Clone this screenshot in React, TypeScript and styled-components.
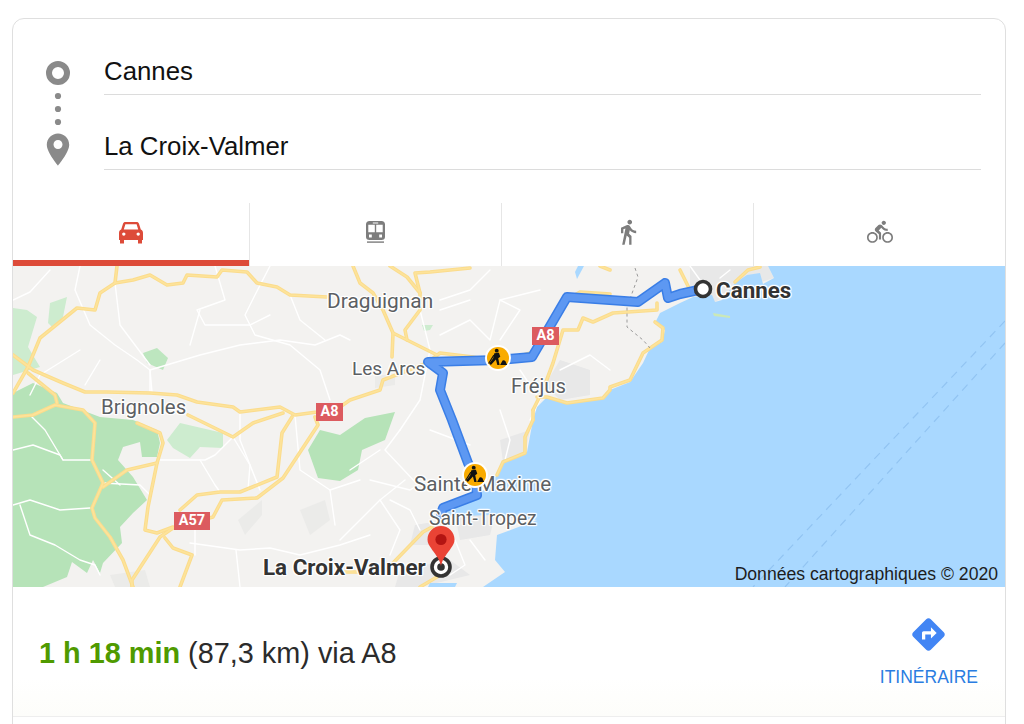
import styled, { createGlobalStyle } from "styled-components";
import { MdDirections, MdDirectionsBike, MdDirectionsWalk } from "react-icons/md";

const GlobalStyle = createGlobalStyle`
  html, body {
    margin: 0;
    height: 100%;
    overflow: hidden;
    background: #fff;
  }
  #root {
    height: 100%;
  }
`;

const Page = styled.div`
  height: 100%;
  box-sizing: border-box;
  padding: 18px 18px 0 12px;
  font-family: "Liberation Sans", Arial, sans-serif;
`;

const Card = styled.div`
  height: 740px;
  box-sizing: border-box;
  background: #fff;
  border: 1px solid #dfdfdf;
  border-radius: 12px;
  overflow: hidden;
`;

const Form = styled.div`
  display: flex;
  gap: 34px;
  padding: 32px 24px 33px 33px;
`;

const StopIcons = styled.svg`
  flex: none;
  margin-top: 10px;
  width: 24px;
  height: 105px;
`;

const Fields = styled.div`
  flex: 1;
  display: flex;
  flex-direction: column;
  gap: 31px;
`;

const Field = styled.div`
  height: 43px;
  line-height: 41px;
  font-size: 25.8px;
  color: #111;
  border-bottom: 1px solid #dcdcdc;
`;

const Tabs = styled.div`
  display: grid;
  grid-template-columns: 236px repeat(3, 1fr);
  height: 63px;
`;

const Tab = styled.div<{ $active?: boolean }>`
  display: flex;
  align-items: center;
  justify-content: center;
  box-sizing: border-box;
  padding-top: ${(p) => (p.$active ? "3px" : "0")};
  padding-bottom: ${(p) => (p.$active ? "0" : "6px")};
  color: ${(p) => (p.$active ? "#dd4b39" : "#7d7d7d")};
  border-left: ${(p) => (p.$active ? "none" : "1px solid #e6e6e6")};
  border-bottom: ${(p) => (p.$active ? "6px solid #dd4b39" : "none")};
`;

const MapArea = styled.div`
  position: relative;
  height: 321px;
  overflow: hidden;
  background: #f3f2f0;
`;

const MapLayer = styled.svg`
  position: absolute;
  inset: 0;
  width: 992px;
  height: 321px;
`;

const PlaceLabel = styled.span<{ $x: number; $y: number; $size: number; $strong?: boolean }>`
  position: absolute;
  left: ${(p) => p.$x - 13}px;
  top: ${(p) => p.$y - 266}px;
  transform: translateY(-50%);
  font-family: Roboto, "Liberation Sans", sans-serif;
  font-size: ${(p) => p.$size}px;
  font-weight: ${(p) => (p.$strong ? 700 : 400)};
  line-height: 1;
  white-space: nowrap;
  color: ${(p) => (p.$strong ? "#333" : "#5c5f63")};
  text-shadow:
    -1px 0 1px #fff, 1px 0 1px #fff, 0 -1px 1px #fff, 0 1px 1px #fff,
    -1px -1px 1px #fff, 1px 1px 1px #fff, 1px -1px 1px #fff, -1px 1px 1px #fff;
`;

const RoadShield = styled.span<{ $x: number; $y: number; $w: number }>`
  position: absolute;
  left: ${(p) => p.$x - 13}px;
  top: ${(p) => p.$y - 266}px;
  width: ${(p) => p.$w}px;
  height: 18px;
  background: #dc5b5f;
  color: #fff;
  font-family: Roboto, "Liberation Sans", sans-serif;
  font-size: 14.5px;
  font-weight: 700;
  line-height: 18px;
  text-align: center;
`;

const Attribution = styled.span`
  position: absolute;
  right: 7px;
  bottom: 3px;
  font-size: 17.6px;
  line-height: 20px;
  color: #1d1d1d;
`;

const Summary = styled.div`
  display: flex;
  justify-content: space-between;
  height: 130px;
  box-sizing: border-box;
  padding: 28px 27px 0 26px;
  background: linear-gradient(#fff 70%, #fdfdfa);
  border-bottom: 1px solid #eeeeee;
`;

const RouteText = styled.div`
  padding-top: 21px;
  font-size: 28.85px;
  line-height: 34px;
  color: #2b2b2b;
`;

const Duration = styled.span`
  font-weight: 700;
  color: #4f9a00;
`;

const DirectionsLink = styled.div`
  display: flex;
  flex-direction: column;
  align-items: center;
  gap: 13px;
  color: #2a7de1;
  font-size: 17.5px;
  line-height: 20px;
  svg {
    color: #4285f4;
  }
`;

const yellowRoads = [
  "13,355 33,370 63,383 85,392 107,392 150,393 177,395 197,402 233,407 240,412 280,407 295,415 317,412 340,407 350,400 380,390 383,380 427,363 440,353 473,357 500,362 530,353",
  "117,266 115,283 100,293 95,310 77,308 40,338 28,367 13,393",
  "115,283 133,280 150,275 167,285 183,283 187,275 217,277 222,270 247,272 257,283 277,287 290,295 327,297",
  "13,417 33,415 55,405 83,410 95,423 92,460 103,483 92,508 95,518 110,537 123,560 133,587",
  "28,373 55,395 57,403",
  "103,487 127,470 157,463 163,443 160,433 137,423",
  "157,463 148,507 145,530 157,533 173,527",
  "132,587 132,580 160,537 173,528 213,517 222,500 257,498 283,478 318,425 315,417",
  "180,510 197,495 220,492 240,492 277,477 282,433 292,417",
  "188,415 233,437 253,423 283,413",
  "165,538 173,548 192,555 180,587",
  "353,266 360,283 373,293 383,310 393,333 392,357",
  "393,333 407,340 437,355",
  "390,266 407,277 420,293 420,310 405,330 407,340",
  "420,293 415,273 430,272 470,268",
  "533,420 525,437 525,453 503,462 497,475",
  "533,410 543,390 553,363 563,330 578,330 583,318 593,322 613,313 657,310 657,303",
  "537,397 547,397 567,403 603,398 610,390 610,387 630,380 643,353 662,340 663,328 655,322",
  "533,410 533,420",
  "393,563 423,532 432,527",
  "420,587 437,577",
  "340,572 358,572",
  "566,300 580,292 610,294",
  "680,270 690,290",
  "735,282 748,270 760,267",
  "600,266 610,270",
];

const whiteRoads = [
  "13,300 30,292 50,270",
  "80,266 75,290 90,325 115,345 137,360 150,370 152,392",
  "115,283 120,325 150,365",
  "150,370 200,355 240,345 280,340 315,345 340,335 350,340",
  "215,266 225,300 197,310 205,325 250,325 270,315",
  "270,266 255,295 245,315 255,335 290,345 320,370 330,400",
  "290,295 300,320 325,340",
  "200,310 190,345",
  "80,350 40,375 30,395",
  "100,360 85,385",
  "150,393 150,370",
  "240,412 240,440 260,490",
  "233,437 215,455 205,460 190,460 160,460",
  "233,437 250,465 248,490",
  "200,460 215,485 220,492",
  "13,450 33,445 60,455 63,460 85,460 92,460",
  "63,460 45,430 30,415",
  "13,505 30,500 60,510 90,508",
  "20,505 30,535 55,545 80,560 95,565 100,575",
  "103,483 140,485 150,495",
  "103,470 120,485",
  "190,543 240,550 270,548 300,555 340,545 370,535",
  "236,550 240,587",
  "195,530 195,555",
  "295,415 300,470 330,490 335,525",
  "330,490 360,480",
  "370,480 410,490 418,485 385,450 400,430",
  "380,450 350,470",
  "420,310 430,350 420,400 400,430",
  "440,300 470,290 490,270",
  "440,335 470,320 490,340 500,300 540,290",
  "440,310 470,300",
  "500,340 520,310 500,300",
  "520,370 540,400 530,420",
  "500,410 510,440 505,460",
  "430,430 470,445",
  "390,500 410,510 420,530",
  "340,540 380,500 405,480",
  "380,500 400,530 390,555",
  "455,540 465,565 450,575",
  "470,540 485,560",
  "560,370 590,355 610,370",
  "700,280 690,266",
  "720,278 730,270",
];

function RoadLines({ roads, color, width }: { roads: string[]; color: string; width: number }) {
  return (
    <g fill="none" stroke={color} strokeWidth={width} strokeLinejoin="round" strokeLinecap="round">
      {roads.map((r) => (
        <polyline key={r} points={r} />
      ))}
    </g>
  );
}

function CarIcon() {
  return (
    <svg width="24" height="22" viewBox="0 0 24 22" fill="currentColor">
      <path
        fillRule="evenodd"
        d="M6.5 0H17.5C18.8 0 19.6 .6 20 1.8L21.8 7.6C23.2 8.2 24 9.2 24 11V18H23V21.5H19V18H5V21.5H1V18H0V11C0 9.2 .8 8.2 2.2 7.6L4 1.8C4.4 .6 5.2 0 6.5 0ZM6.4 2.2L4.8 7.4H19.2L17.6 2.2ZM4.8 10.4A1.7 1.7 0 1 0 4.8 13.8A1.7 1.7 0 1 0 4.8 10.4ZM19.2 10.4A1.7 1.7 0 1 0 19.2 13.8A1.7 1.7 0 1 0 19.2 10.4Z"
      />
    </svg>
  );
}

function TrainIcon() {
  return (
    <svg width="20" height="22" viewBox="0 0 20 22" fill="currentColor">
      <path
        fillRule="evenodd"
        d="M3.5 0H15.5C17.7 0 19 1.3 19 3.5V16C19 18 17.7 19 15.5 19H3.5C1.3 19 0 18 0 16V3.5C0 1.3 1.3 0 3.5 0ZM6.8 1.5V2.6H12.2V1.5ZM2.3 3.8V11.2H8.8V3.8ZM10.2 3.8V11.2H16.7V3.8ZM3 13.6V16.4H5.8V13.6ZM13.2 13.6V16.4H16V13.6Z"
      />
      <rect x="1" y="20.4" width="17" height="1.4" />
    </svg>
  );
}

function BaseMap() {
  const route =
    "703,289 680,294 668,298 665,283 638,302 567,297 532,357 498,360 428,362 443,373 440,390 452,420 468,463 475,475 477,495 443,508 441,514";
  return (
    <MapLayer viewBox="13 266 992 321">
      {/* forests */}
      <polygon
        fill="#b6e3b8"
        points="13,393 33,383 57,393 63,403 100,417 133,420 157,430 160,443 157,457 142,457 140,442 123,447 118,460 133,477 147,500 133,513 120,527 122,543 103,563 100,573 93,560 87,573 72,562 67,577 43,587 13,587"
      />
      <polygon fill="#cdeccf" points="13,308 27,310 37,317 28,347 40,367 13,375" />
      <polygon fill="#cdeccf" points="48,323 50,303 67,297 63,317 53,328" />
      <polygon fill="#bde6bf" points="143,353 157,348 168,358 163,370 147,363" />
      <polygon fill="#cdeccf" points="167,440 180,423 223,433 223,448 200,447 190,458 173,448" />
      <polygon
        fill="#b6e3b8"
        points="320,430 340,435 365,418 395,412 385,440 362,450 358,470 340,481 318,478 308,450"
      />
      <polygon fill="#cdeccf" points="422,325 433,325 430,330 424,331" />

      {/* built-up patches */}
      <g fill="#e8e8e8">
        <polygon points="690,266 768,266 774,278 735,290 715,302 690,296" />
        <polygon points="560,360 590,370 590,395 560,400 545,385" />
        <polygon points="500,440 530,430 525,455 503,462" />
        <polygon points="415,525 445,520 440,545 410,545" />
        <polygon points="400,570 450,560 470,575 420,587 395,587" />
        <polygon points="455,515 495,515 490,535 460,540" />
      </g>
      <g fill="#ebebe9">
        <polygon points="238,520 262,500 262,515 245,535" />
        <polygon points="300,510 325,500 330,520 310,535" />
        <polygon points="375,375 395,375 395,385 375,388" />
        <polygon points="110,575 145,570 150,587 115,587" />
      </g>

      <RoadLines roads={whiteRoads} color="#ffffff" width={1.4} />

      {/* sea */}
      <path
        fill="#a9d8ff"
        d="M768 266L774 278L763 284L760 273L747 275L735 283L722 300L715 302L712 295L693 297L680 303L660 313L655 323L665 330L662 342L650 348L643 363L630 382L610 390L603 398L567 403L547 397L537 407L533 420L527 452L503 460L497 475L484 490L470 500L445 508L440 517L490 515L537 520L497 535L495 560L505 572L483 587L1005 587L1005 266Z"
      />
      <polygon fill="#a9d8ff" points="430,583 457,583 455,587 428,587" />
      <polygon fill="#a9d8ff" points="578,266 584,266 577,279 575,272" />
      <polygon fill="#cbe8b8" points="713,313 730,316 730,318 714,316" />

      <RoadLines roads={yellowRoads} color="#fbdc8c" width={3.6} />
      <RoadLines roads={yellowRoads} color="#fde39a" width={1.6} />

      {/* border track and ferry lines */}
      <polyline
        points="635,268 638,277 627,307 627,327 643,340 650,348"
        fill="none"
        stroke="#9b9b9b"
        strokeWidth="1"
        strokeDasharray="3 3"
      />
      <g fill="none" stroke="#92c4f2" strokeWidth="1.2" strokeDasharray="8 6">
        <line x1="1005" y1="321" x2="753" y2="587" />
        <line x1="1005" y1="343" x2="785" y2="587" />
      </g>

      {/* route */}
      <g fill="none" strokeLinejoin="round" strokeLinecap="round">
        <polyline points={route} stroke="#3a7ee6" strokeWidth="10" />
        <polyline points={route} stroke="#5d98f2" strokeWidth="7" />
      </g>
    </MapLayer>
  );
}

function WorkMarker({ x, y }: { x: number; y: number }) {
  return (
    <g transform={`translate(${x} ${y})`}>
      <circle r="13" fill="#fff" />
      <circle r="11" fill="#f9ab00" />
      <g transform="scale(1.15) translate(-0.6 -0.4)" fill="#111">
        <circle cx="-0.5" cy="-6" r="1.7" />
        <path d="M-2.6-3.8 L1.4-4.2 L2.6-0.6 L0.8 0.6 L2 6.5 L0 6.5 L-1.2 1.6 L-3 3.6 L-5.6 6.5 L-7 5.2 L-3.6 0.6 Z" />
        <path d="M-3.4-2.4 L-8 5 L-7.2 5.5 L-2.6-1.8 Z" />
        <path d="M2.4 6.5 L4.6 2.6 Q6 1.8 7 3.2 L8.6 6.5 Z" />
      </g>
    </g>
  );
}

function MapOverlay() {
  return (
    <MapLayer viewBox="13 266 992 321">
      <WorkMarker x={498} y={358} />
      <WorkMarker x={475} y={475} />

      <circle cx="703" cy="289" r="7.5" fill="#fff" stroke="#333" strokeWidth="3.6" />

      <circle cx="441" cy="567" r="9" fill="#fff" stroke="#333" strokeWidth="3.6" />
      <circle cx="441" cy="567" r="3.8" fill="#333" />

      <path
        d="M441 566 C439.5 558 434 553 431 548 C429 545 427.5 543 427.5 539.5 C427.5 532 433.5 526 441 526 C448.5 526 454.5 532 454.5 539.5 C454.5 543 453 545 451 548 C448 553 442.5 558 441 566 Z"
        fill="#ea4335"
      />
      <circle cx="441" cy="539.5" r="5.6" fill="#b31412" />
    </MapLayer>
  );
}

export default function App() {
  return (
    <>
      <GlobalStyle />
      <Page>
        <Card>
          <Form>
            <StopIcons viewBox="0 0 24 105">
              <circle cx="12" cy="12" r="9" fill="none" stroke="#8a8a8a" strokeWidth="6" />
              <circle cx="12" cy="35" r="3.1" fill="#8a8a8a" />
              <circle cx="12" cy="48" r="3.1" fill="#8a8a8a" />
              <circle cx="12" cy="61" r="3.1" fill="#8a8a8a" />
              <path
                fillRule="evenodd"
                d="M12 72.5C5.8 72.5 0.8 77.5 0.8 83.7C0.8 91.5 12 104.5 12 104.5C12 104.5 23.2 91.5 23.2 83.7C23.2 77.5 18.2 72.5 12 72.5ZM12 79C14.5 79 16.5 81 16.5 83.5C16.5 86 14.5 88 12 88C9.5 88 7.5 86 7.5 83.5C7.5 81 9.5 79 12 79Z"
                fill="#8a8a8a"
              />
            </StopIcons>
            <Fields>
              <Field>Cannes</Field>
              <Field>La Croix-Valmer</Field>
            </Fields>
          </Form>

          <Tabs>
            <Tab $active>
              <CarIcon />
            </Tab>
            <Tab>
              <TrainIcon />
            </Tab>
            <Tab>
              <MdDirectionsWalk size={28} />
            </Tab>
            <Tab>
              <MdDirectionsBike size={26} />
            </Tab>
          </Tabs>

          <MapArea>
            <BaseMap />
            <PlaceLabel $x={327} $y={301} $size={20.9}>Draguignan</PlaceLabel>
            <PlaceLabel $x={352} $y={368} $size={19}>Les Arcs</PlaceLabel>
            <PlaceLabel $x={511} $y={386} $size={20.3}>Fréjus</PlaceLabel>
            <PlaceLabel $x={101} $y={407} $size={20.4}>Brignoles</PlaceLabel>
            <PlaceLabel $x={414} $y={484} $size={20.7}>Sainte-Maxime</PlaceLabel>
            <PlaceLabel $x={429} $y={519} $size={19.3}>Saint-Tropez</PlaceLabel>
            <PlaceLabel $x={716} $y={290} $size={22.4} $strong>Cannes</PlaceLabel>
            <PlaceLabel $x={263} $y={567} $size={22.4} $strong>La Croix-Valmer</PlaceLabel>
            <RoadShield $x={532} $y={327} $w={27}>A8</RoadShield>
            <RoadShield $x={316} $y={403} $w={27}>A8</RoadShield>
            <RoadShield $x={174} $y={512} $w={36}>A57</RoadShield>
            <MapOverlay />
            <Attribution>Données cartographiques © 2020</Attribution>
          </MapArea>

          <Summary>
            <RouteText>
              <Duration>1 h 18 min</Duration> (87,3 km) via A8
            </RouteText>
            <DirectionsLink>
              <MdDirections size={39} />
              ITINÉRAIRE
            </DirectionsLink>
          </Summary>
        </Card>
      </Page>
    </>
  );
}
